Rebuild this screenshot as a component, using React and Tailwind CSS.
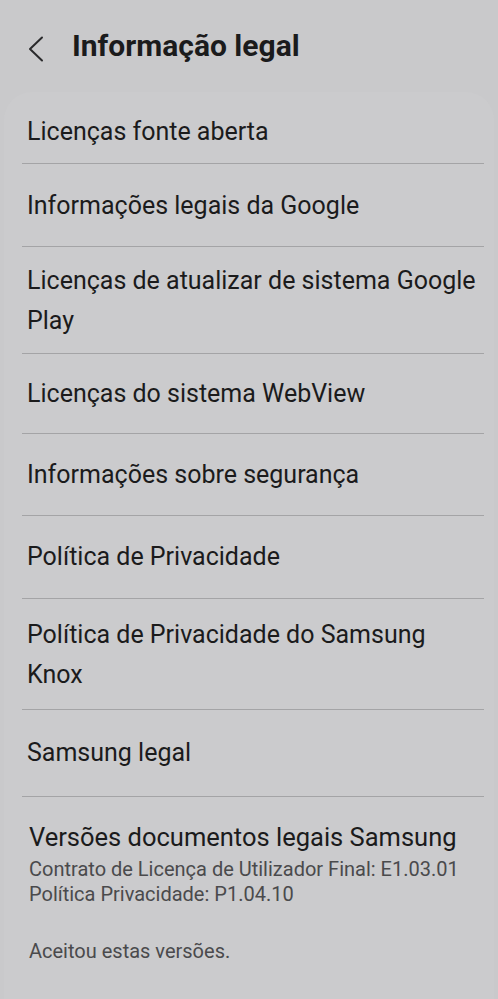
import React from 'react';

const font = { fontFamily: 'Roboto, "Noto Sans", sans-serif' };

// pad per row, measured against the reference dividers
const items = [
  { label: 'Licenças fonte aberta', pad: 'pt-[20px] pb-[11px]' },
  { label: 'Informações legais da Google', pad: 'pt-[22px] pb-[20px]' },
  { label: 'Licenças de atualizar de sistema Google Play', pad: 'pt-[14px] pb-[12px]' },
  { label: 'Licenças do sistema WebView', pad: 'pt-[20px] pb-[19px]' },
  { label: 'Informações sobre segurança', pad: 'pt-[21px] pb-[20px]' },
  { label: 'Política de Privacidade', pad: 'pt-[21px] pb-[21px]' },
  { label: 'Política de Privacidade do Samsung Knox', pad: 'pt-[16px] pb-[14px]' },
  { label: 'Samsung legal', pad: 'pt-[23px] pb-[23px]' },
];

const Divider = () => <div className="ml-[18px] mr-[10px] h-px bg-[#a4a4a6]" />;

const Row = ({ label, pad }) => (
  <>
    <div className={`${pad} pl-[23px] pr-[10px] text-[25px] leading-[40px] text-[#1b1b1c]`}>{label}</div>
    <Divider />
  </>
);

export default function App() {
  return (
    <div className="min-h-[999px] w-full bg-[#c9c9cb]" style={font}>
      {/* Header */}
      <div className="flex h-[92px] items-start pt-[26px]">
        <div className="flex w-[72px] justify-start pl-[27px] pt-[10px]">
          <svg width="18" height="26" viewBox="0 0 18 26" fill="none">
            <path d="M15 1.5 L3 13 L15 24.5" stroke="#2a2a2c" strokeWidth="2" strokeLinecap="round" strokeLinejoin="round" />
          </svg>
        </div>
        <h1 className="text-[30px] font-bold leading-[40px] text-[#1b1b1c]">Informação legal</h1>
      </div>

      {/* Card */}
      <div className="mx-[4px] rounded-t-[28px] bg-[#cbcbcd] pb-[40px]">
        {items.map((it) => (
          <Row key={it.label} {...it} />
        ))}

        <div className="pl-[25px] pr-[10px] pt-[20px]">
          <div className="text-[25.5px] leading-[40px] text-[#1b1b1c]">Versões documentos legais Samsung</div>
          <div className="text-[20px] leading-[25px] text-[#4a4a4c]">
            Contrato de Licença de Utilizador Final: E1.03.01
          </div>
          <div className="text-[20px] leading-[25px] text-[#4a4a4c]">Política Privacidade: P1.04.10</div>
          <div className="mt-[32px] text-[20px] leading-[25px] text-[#4a4a4c]">Aceitou estas versões.</div>
        </div>
      </div>
    </div>
  );
}
